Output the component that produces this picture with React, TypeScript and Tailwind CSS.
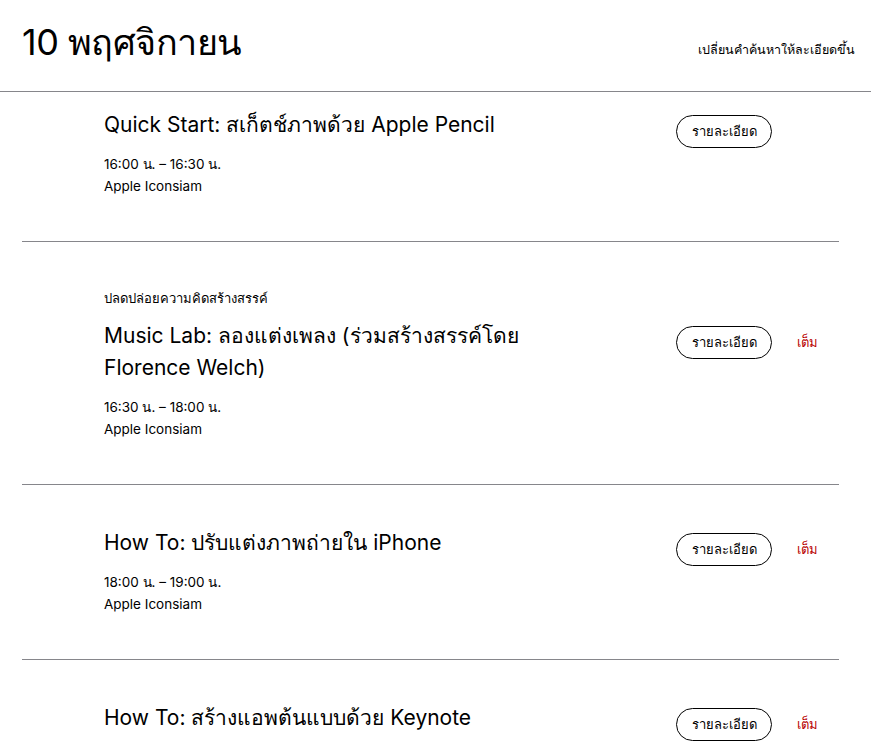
import React from "react";

type Session = {
  category?: string;
  title: string;
  time: string;
  place: string;
  full: boolean;
  pt: string;
};

const sessions: Session[] = [
  {
    title: "Quick Start: สเก็ตช์ภาพด้วย Apple Pencil",
    time: "16:00 น. – 16:30 น.",
    place: "Apple Iconsiam",
    full: false,
    pt: "pt-[17px]",
  },
  {
    category: "ปลดปล่อยความคิดสร้างสรรค์",
    title: "Music Lab: ลองแต่งเพลง (ร่วมสร้างสรรค์โดย Florence Welch)",
    time: "16:30 น. – 18:00 น.",
    place: "Apple Iconsiam",
    full: true,
    pt: "pt-[43px]",
  },
  {
    title: "How To: ปรับแต่งภาพถ่ายใน iPhone",
    time: "18:00 น. – 19:00 น.",
    place: "Apple Iconsiam",
    full: true,
    pt: "pt-[42px]",
  },
  {
    title: "How To: สร้างแอพต้นแบบด้วย Keynote",
    time: "19:00 น. – 20:00 น.",
    place: "Apple Iconsiam",
    full: true,
    pt: "pt-[42px]",
  },
];

export default function App() {
  return (
    <div
      className="w-[871px] h-[747px] overflow-hidden bg-white text-[#1d1d1f]"
      style={{ fontFamily: '"Inter", "Noto Sans", "Liberation Sans", sans-serif' }}
    >
      <header className="flex items-end justify-between border-b border-[#86868b] h-[92px] pl-[22px] pr-[16px] pb-[27px]">
        <h1 className="text-[36px] leading-[44px] font-normal text-black tracking-[-0.5px]">10 พฤศจิกายน</h1>
        <button className="text-[12.5px] leading-[18px] text-black mb-[5px]">เปลี่ยนคำค้นหาให้ละเอียดขึ้น</button>
      </header>
      <div className="mx-[22px] w-[817px]">
        {sessions.map((s, i) => (
          <div key={i} className={`border-b border-[#86868b] ${s.pt} pb-[44px] pl-[82px]`}>
            {s.category && (
              <div className="text-[13px] leading-[26px] mb-[9px] text-black">{s.category}</div>
            )}
            <div className="flex">
              <div className="w-[470px]">
                <h2 className="text-[21px] leading-[32px] font-normal text-black w-[440px]">{s.title}</h2>
                <div className="mt-[12px] text-[13.5px] leading-[22px] text-black">{s.time}</div>
                <div className="text-[13.5px] leading-[22px] text-black">{s.place}</div>
              </div>
              <div className="ml-[102px] mt-[6px] flex items-center h-[33px]">
                <button className="h-[33px] w-[96px] rounded-full border border-black text-[13px] text-black flex items-center justify-center">
                  รายละเอียด
                </button>
                {s.full && <span className="ml-[25px] text-[13px] text-[#b80000]">เต็ม</span>}
              </div>
            </div>
          </div>
        ))}
      </div>
    </div>
  );
}
